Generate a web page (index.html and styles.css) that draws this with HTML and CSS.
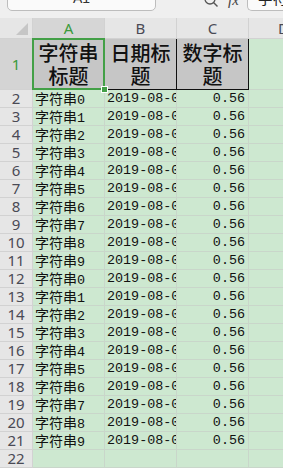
FILE: index.html
```html
<!DOCTYPE html>
<html>
<head>
<meta charset="utf-8">
<link rel="stylesheet" href="styles.css">
</head>
<body>
<div class="topbar">
  <div class="namebox">A1</div>
  <svg class="search" width="16" height="12" viewBox="0 0 16 12"><circle cx="6" cy="-1" r="5" fill="none" stroke="#555" stroke-width="1.3"/><line x1="9.5" y1="2.5" x2="13.5" y2="6.5" stroke="#555" stroke-width="1.5"/></svg>
  <span class="fx">fx</span>
  <div class="formula">字符串标题</div>
</div>
<div class="sheet">
  <div class="corner"><span class="tri"></span></div>
  <div class="colh sel">A</div>
  <div class="colh">B</div>
  <div class="colh">C</div>
  <div class="colh last dh">D</div>

  <div class="rowh selr">1</div>
  <div class="head a1">字符串标题</div>
  <div class="head">日期标题</div>
  <div class="head">数字标题</div>
  <div class="cell last"></div>

  <div class="rowh">2</div><div class="cell"><span class="cjk">字符串</span>0</div><div class="cell d">2019-08-01</div><div class="cell n">0.56</div><div class="cell last"></div>
  <div class="rowh">3</div><div class="cell"><span class="cjk">字符串</span>1</div><div class="cell d">2019-08-01</div><div class="cell n">0.56</div><div class="cell last"></div>
  <div class="rowh">4</div><div class="cell"><span class="cjk">字符串</span>2</div><div class="cell d">2019-08-01</div><div class="cell n">0.56</div><div class="cell last"></div>
  <div class="rowh">5</div><div class="cell"><span class="cjk">字符串</span>3</div><div class="cell d">2019-08-01</div><div class="cell n">0.56</div><div class="cell last"></div>
  <div class="rowh">6</div><div class="cell"><span class="cjk">字符串</span>4</div><div class="cell d">2019-08-01</div><div class="cell n">0.56</div><div class="cell last"></div>
  <div class="rowh">7</div><div class="cell"><span class="cjk">字符串</span>5</div><div class="cell d">2019-08-01</div><div class="cell n">0.56</div><div class="cell last"></div>
  <div class="rowh">8</div><div class="cell"><span class="cjk">字符串</span>6</div><div class="cell d">2019-08-01</div><div class="cell n">0.56</div><div class="cell last"></div>
  <div class="rowh">9</div><div class="cell"><span class="cjk">字符串</span>7</div><div class="cell d">2019-08-01</div><div class="cell n">0.56</div><div class="cell last"></div>
  <div class="rowh">10</div><div class="cell"><span class="cjk">字符串</span>8</div><div class="cell d">2019-08-01</div><div class="cell n">0.56</div><div class="cell last"></div>
  <div class="rowh">11</div><div class="cell"><span class="cjk">字符串</span>9</div><div class="cell d">2019-08-01</div><div class="cell n">0.56</div><div class="cell last"></div>
  <div class="rowh">12</div><div class="cell"><span class="cjk">字符串</span>0</div><div class="cell d">2019-08-01</div><div class="cell n">0.56</div><div class="cell last"></div>
  <div class="rowh">13</div><div class="cell"><span class="cjk">字符串</span>1</div><div class="cell d">2019-08-01</div><div class="cell n">0.56</div><div class="cell last"></div>
  <div class="rowh">14</div><div class="cell"><span class="cjk">字符串</span>2</div><div class="cell d">2019-08-01</div><div class="cell n">0.56</div><div class="cell last"></div>
  <div class="rowh">15</div><div class="cell"><span class="cjk">字符串</span>3</div><div class="cell d">2019-08-01</div><div class="cell n">0.56</div><div class="cell last"></div>
  <div class="rowh">16</div><div class="cell"><span class="cjk">字符串</span>4</div><div class="cell d">2019-08-01</div><div class="cell n">0.56</div><div class="cell last"></div>
  <div class="rowh">17</div><div class="cell"><span class="cjk">字符串</span>5</div><div class="cell d">2019-08-01</div><div class="cell n">0.56</div><div class="cell last"></div>
  <div class="rowh">18</div><div class="cell"><span class="cjk">字符串</span>6</div><div class="cell d">2019-08-01</div><div class="cell n">0.56</div><div class="cell last"></div>
  <div class="rowh">19</div><div class="cell"><span class="cjk">字符串</span>7</div><div class="cell d">2019-08-01</div><div class="cell n">0.56</div><div class="cell last"></div>
  <div class="rowh">20</div><div class="cell"><span class="cjk">字符串</span>8</div><div class="cell d">2019-08-01</div><div class="cell n">0.56</div><div class="cell last"></div>
  <div class="rowh">21</div><div class="cell"><span class="cjk">字符串</span>9</div><div class="cell d">2019-08-01</div><div class="cell n">0.56</div><div class="cell last"></div>
  <div class="rowh">22</div><div class="cell"></div><div class="cell"></div><div class="cell"></div><div class="cell last"></div>
</div>
</body>
</html>
```

FILE: styles.css
```css
* { box-sizing: border-box; }
html, body { margin: 0; padding: 0; }
body {
  width: 283px;
  height: 468px;
  overflow: hidden;
  background: #cde8d0;
  font-family: "Liberation Mono", monospace;
}
.topbar {
  height: 18px;
  width: 283px;
  background: #efefef;
  display: flex;
  align-items: flex-start;
  overflow: hidden;
}
.namebox {
  margin-left: 7px;
  margin-top: -14px;
  width: 149px;
  height: 25px;
  border: 1px solid #bdbdbd;
  border-radius: 5px;
  background: #fafafa;
  text-align: center;
  font-family: "Liberation Sans", sans-serif;
  font-size: 14px;
  line-height: 23px;
  color: #333;
  flex: none;
}
.search {
  margin-left: 48px;
  flex: none;
}
.fx {
  margin-left: 8px;
  margin-top: -8px;
  font-family: "Liberation Serif", serif;
  font-style: italic;
  font-size: 15px;
  color: #444;
  flex: none;
}
.formula {
  margin-left: 8px;
  margin-top: -14px;
  height: 25px;
  flex: 1;
  border: 1px solid #bdbdbd;
  border-right: none;
  border-radius: 5px 0 0 5px;
  background: #fafafa;
  padding-left: 10px;
  font-family: "Noto Sans CJK SC", sans-serif;
  font-size: 15px;
  line-height: 22px;
  color: #222;
  white-space: nowrap;
  overflow: hidden;
}
.sheet {
  width: 283px;
  display: grid;
  grid-template-columns: 33px 72px 72px 72px 34px;
  grid-template-rows: 21px 51px repeat(21, 18px);
}
.sheet > div {
  border-right: 1px solid #c9d6ca;
  border-bottom: 1px solid #c9d6ca;
  overflow: hidden;
  white-space: nowrap;
}
.corner {
  background: #e6e6e6;
  position: relative;
}
.sheet > .corner, .sheet > .colh, .sheet > .rowh {
  border-color: #d2d2d2;
}
.tri {
  position: absolute;
  right: 4px;
  bottom: 3px;
  width: 0;
  height: 0;
  border-left: 12px solid transparent;
  border-bottom: 12px solid #c6c6c6;
}
.colh {
  background: #e6e6e6;
  text-align: center;
  font-family: "Noto Sans", sans-serif;
  font-size: 15px;
  line-height: 20px;
  color: #4a4a55;
}
.colh.dh {
  text-align: left;
  padding-left: 29px;
}
.colh.sel {
  background: #d6d6d6;
  color: #3a9a3a;
}
.rowh {
  background: #e6e6e6;
  text-align: center;
  font-family: "Noto Sans", sans-serif;
  font-size: 15px;
  line-height: 17px;
  color: #4a4a55;
}
.rowh.selr {
  background: #d4d4d4;
  color: #3a9a3a;
  display: flex;
  align-items: center;
  justify-content: center;
}
.sheet > .head {
  background: #c6c6c6;
  border-right: 1px solid #111;
  border-bottom: 1px solid #111;
  font-family: "Noto Sans CJK SC", sans-serif;
  font-weight: 500;
  font-size: 20px;
  line-height: 23px;
  color: #111;
  white-space: normal;
  text-align: center;
  display: flex;
  align-items: center;
  justify-content: center;
  padding: 0 5px;
  overflow: visible;
}
.a1 { position: relative; }
.a1::after {
  content: "";
  position: absolute;
  left: -1px;
  top: -1px;
  right: -1px;
  bottom: -1px;
  border: 2px solid #43a047;
}
.a1::before {
  content: "";
  position: absolute;
  right: -4px;
  bottom: -4px;
  width: 5px;
  height: 5px;
  background: #43a047;
  border: 1px solid #fff;
  z-index: 2;
}
.cell {
  font-size: 13.4px;
  line-height: 17px;
  color: #111;
  padding: 0 2px;
}
.cjk {
  font-family: "Noto Sans CJK SC", sans-serif;
  font-size: 14px;
  line-height: 17px;
  vertical-align: baseline;
}
.cell.n { text-align: right; padding-right: 3px; }
.sheet > .last { border-right: none; }
```
